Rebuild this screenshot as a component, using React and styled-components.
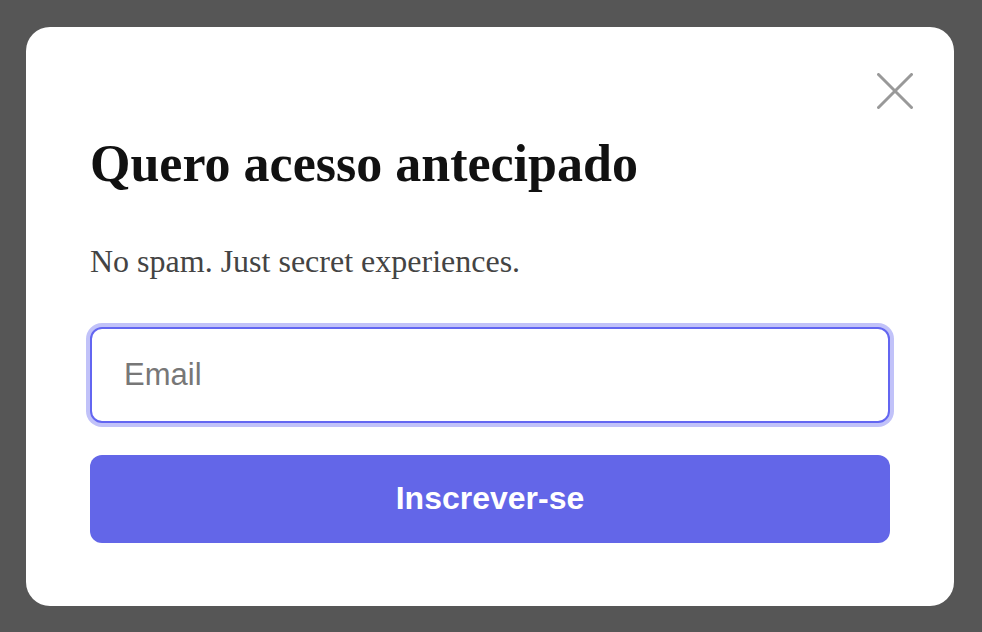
import React from "react";
import styled, { createGlobalStyle } from "styled-components";

const GlobalStyle = createGlobalStyle`
  html, body {
    margin: 0;
    padding: 0;
    background: #565656;
  }
  * {
    box-sizing: border-box;
  }
`;

const Overlay = styled.div`
  width: 982px;
  height: 632px;
  padding: 27px 28px 26px 26px;
  background: #565656;
`;

const Modal = styled.div`
  position: relative;
  width: 928px;
  height: 579px;
  background: #fff;
  border-radius: 24px;
  padding: 106px 64px 0;
  display: flex;
  flex-direction: column;
`;

const CloseButton = styled.button`
  position: absolute;
  top: 46px;
  right: 41px;
  width: 36px;
  height: 36px;
  padding: 0;
  border: none;
  background: transparent;
  cursor: pointer;
  svg {
    display: block;
  }
`;

const Title = styled.h2`
  margin: 0;
  font-family: "Liberation Serif", "Times New Roman", serif;
  font-weight: 700;
  font-size: 52px;
  line-height: 1.2;
  color: #111;
`;

const Subtitle = styled.p`
  margin: 47px 0 0;
  font-family: "Liberation Serif", "Times New Roman", serif;
  font-size: 32px;
  line-height: 1.2;
  color: #444;
`;

const EmailInput = styled.input`
  margin-top: 46px;
  width: 100%;
  height: 96px;
  border: 2px solid #6366f1;
  border-radius: 12px;
  box-shadow: 0 0 0 4px rgba(99, 102, 241, 0.4);
  outline: none;
  padding: 0 32px;
  font-family: "Liberation Sans", Arial, sans-serif;
  font-size: 31px;
  color: #333;
  &::placeholder {
    color: #777;
  }
`;

const SubmitButton = styled.button`
  margin-top: 32px;
  width: 100%;
  height: 88px;
  border: none;
  border-radius: 12px;
  background: #6366e8;
  color: #fff;
  font-family: "Liberation Sans", Arial, sans-serif;
  font-weight: 700;
  font-size: 32px;
  cursor: pointer;
`;

export default function App() {
  return (
    <>
      <GlobalStyle />
      <Overlay>
        <Modal>
          <CloseButton aria-label="Fechar">
            <svg width="36" height="36" viewBox="0 0 36 36">
              <path
                d="M1.5 1.5 L34.5 34.5 M34.5 1.5 L1.5 34.5"
                stroke="#999"
                strokeWidth="3"
                strokeLinecap="round"
              />
            </svg>
          </CloseButton>
          <Title>Quero acesso antecipado</Title>
          <Subtitle>No spam. Just secret experiences.</Subtitle>
          <EmailInput type="email" placeholder="Email" />
          <SubmitButton>Inscrever-se</SubmitButton>
        </Modal>
      </Overlay>
    </>
  );
}
